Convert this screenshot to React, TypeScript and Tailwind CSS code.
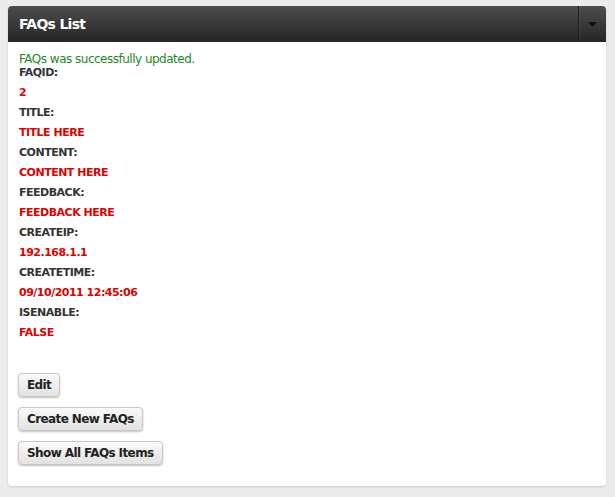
import React from 'react';

const fields = [
  { label: 'FAQID:', value: '2' },
  { label: 'TITLE:', value: 'TITLE HERE' },
  { label: 'CONTENT:', value: 'CONTENT HERE' },
  { label: 'FEEDBACK:', value: 'FEEDBACK HERE' },
  { label: 'CREATEIP:', value: '192.168.1.1' },
  { label: 'CREATETIME:', value: '09/10/2011 12:45:06' },
  { label: 'ISENABLE:', value: 'FALSE' },
];

const buttons = ['Edit', 'Create New FAQs', 'Show All FAQs Items'];

export default function App() {
  return (
    <div
      className="min-h-[497px] w-[615px] bg-[#ececec] px-[8px] pt-[6px]"
      style={{ fontFamily: '"DejaVu Sans", Tahoma, sans-serif' }}
    >
      <div className="h-[480px] w-[598px] rounded-[4px] bg-white shadow-[0_1px_2px_rgba(0,0,0,0.15)]">
        <div className="flex h-[36px] items-stretch rounded-t-[4px] bg-gradient-to-b from-[#4d4d4d] to-[#262626]">
          <h2 className="flex flex-1 items-center pl-[11px] text-[14px] font-bold tracking-[-0.7px] text-white">
            FAQs List
          </h2>
          <div className="flex w-[28px] items-center justify-center border-l border-[#1a1a1a] shadow-[inset_1px_0_0_rgba(255,255,255,0.08)]">
            <svg width="9" height="5" viewBox="0 0 9 5">
              <path d="M0 0h9L4.5 5z" fill="#111" />
            </svg>
          </div>
        </div>

        <div className="px-[10px] pt-[10px]">
          <p className="pl-[1px] text-[12px] leading-[14px] tracking-[-0.5px] text-[#1e8a1e]">
            FAQs was successfully updated.
          </p>
          <dl className="pl-[1px] text-[11px] font-bold tracking-[-0.5px]">
            {fields.map((f) => (
              <React.Fragment key={f.label}>
                <dt className="h-[20px] leading-[14px] text-[#333]">{f.label}</dt>
                <dd className="h-[20px] leading-[14px] text-[#e00000]">{f.value}</dd>
              </React.Fragment>
            ))}
          </dl>

          <div className="mt-[27px] flex flex-col items-start gap-[10px]">
            {buttons.map((b) => (
              <button
                key={b}
                className="h-[24px] rounded-[4px] border border-[#c8c8c8] bg-gradient-to-b from-[#fafafa] to-[#e2e2e2] px-[8px] text-[12px] font-bold tracking-[-0.6px] text-[#222] shadow-[0_1px_2px_rgba(0,0,0,0.25)]"
              >
                {b}
              </button>
            ))}
          </div>
        </div>
      </div>
    </div>
  );
}
